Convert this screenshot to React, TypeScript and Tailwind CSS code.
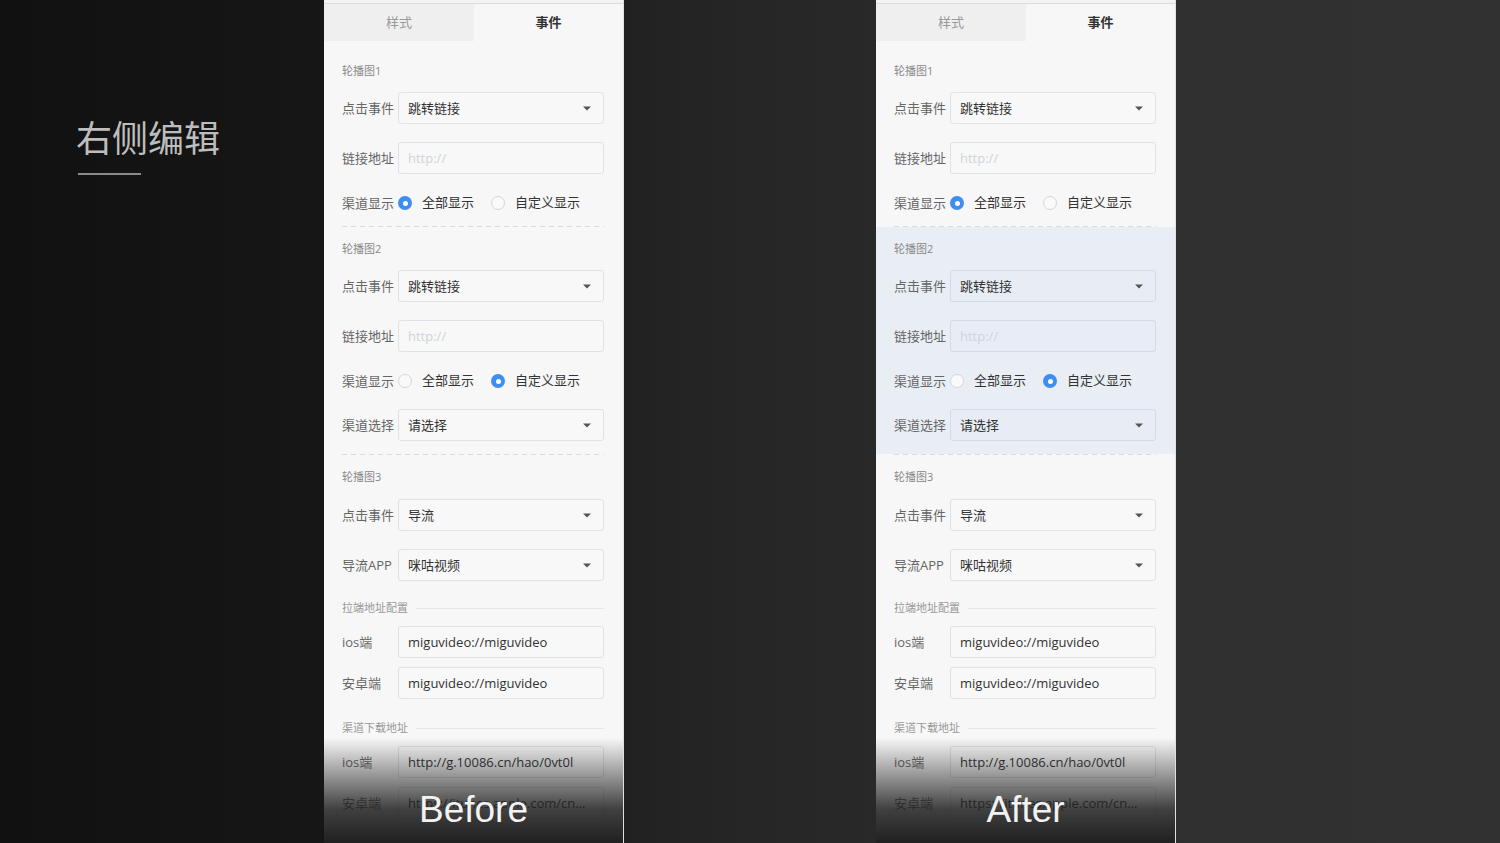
import React from 'react';

const Caret = () => (
  <svg width="8" height="5" viewBox="0 0 8 5" className="shrink-0">
    <path d="M0 0.5h8L4 4.5z" fill="#555" />
  </svg>
);

const fieldCls = (hl?: boolean) =>
  hl ? 'border-[#d3dbe6] bg-[#e8edf5]' : 'border-[#dce2e8] bg-[#f8f8f8]';

function Row({ label, children }: { label: string; children: React.ReactNode }) {
  return (
    <div className="flex items-center">
      <span className="w-[56px] shrink-0 text-[13px] leading-5 text-[#666]">{label}</span>
      {children}
    </div>
  );
}

function Select({ value, hl }: { value: string; hl?: boolean }) {
  return (
    <div className={`flex h-8 flex-1 items-center justify-between rounded-[3px] border pl-[9px] pr-[12px] ${fieldCls(hl)}`}>
      <span className="pt-px text-[13px] text-[#333]">{value}</span>
      <Caret />
    </div>
  );
}

function Input({ value, placeholder, hl }: { value?: string; placeholder?: string; hl?: boolean }) {
  return (
    <div className={`flex h-8 min-w-0 flex-1 items-center overflow-hidden rounded-[3px] border pl-[9px] pr-2 ${fieldCls(hl)}`}>
      {value ? (
        <span className="whitespace-nowrap pt-px text-[13px] text-[#333]">{value}</span>
      ) : (
        <span className="pt-px text-[13px] text-[#cfd4da]">{placeholder}</span>
      )}
    </div>
  );
}

function Radio({ checked }: { checked?: boolean }) {
  if (checked) {
    return (
      <span className="flex h-[14px] w-[14px] shrink-0 items-center justify-center rounded-full bg-[#3d8ef0]">
        <span className="h-[5px] w-[5px] rounded-full bg-white" />
      </span>
    );
  }
  return <span className="h-[14px] w-[14px] shrink-0 rounded-full border border-[#cfd7df] bg-[#fafafa]" />;
}

function ChannelRadios({ custom }: { custom?: boolean }) {
  return (
    <Row label="渠道显示">
      <div className="flex h-5 items-center text-[13px] text-[#333]">
        <Radio checked={!custom} />
        <span className="ml-[10px]">全部显示</span>
        <span className="ml-[17px] flex">
          <Radio checked={custom} />
        </span>
        <span className="ml-[10px]">自定义显示</span>
      </div>
    </Row>
  );
}

const SectionLabel = ({ text }: { text: string }) => (
  <div className="h-4 text-[11px] leading-4 text-[#888]">{text}</div>
);

const LineHeading = ({ text }: { text: string }) => (
  <div className="flex h-4 items-center gap-2 text-[11px] leading-4 text-[#999]">
    <span>{text}</span>
    <div className="h-px flex-1 bg-[#e6e6e6]" />
  </div>
);

const Dashed = () => (
  <div className="ml-[18px] mr-[19px] h-px bg-[repeating-linear-gradient(90deg,#dadada_0_5px,transparent_5px_9px)]" />
);

function Panel({ caption, after }: { caption: string; after?: boolean }) {
  return (
    <div className="relative h-full w-[300px] shrink-0 overflow-hidden border-r border-[#e0e0e0] bg-[#f7f7f7]">
      <div className="h-[3px] bg-[#f3f3f3]" />
      <div className="flex h-[38px] border-t border-[#dcdcdc] text-[13px]">
        <div className="flex w-[150px] items-center justify-center bg-[#efefef] text-[#999]">样式</div>
        <div className="flex flex-1 items-center justify-center font-semibold text-[#333]">事件</div>
      </div>

      {/* 轮播图1 */}
      <div className="pl-[18px] pr-[19px] pb-[13px] pt-[22px]">
        <SectionLabel text="轮播图1" />
        <div className="mt-[13px]">
          <Row label="点击事件">
            <Select value="跳转链接" />
          </Row>
        </div>
        <div className="mt-[18px]">
          <Row label="链接地址">
            <Input placeholder="http://" />
          </Row>
        </div>
        <div className="mt-[19px]">
          <ChannelRadios />
        </div>
      </div>
      <Dashed />

      {/* 轮播图2 */}
      <div className={`pl-[18px] pr-[19px] pb-[13px] pt-[14px] ${after ? 'bg-[#e9eef5]' : ''}`}>
        <SectionLabel text="轮播图2" />
        <div className="mt-[13px]">
          <Row label="点击事件">
            <Select value="跳转链接" hl={after} />
          </Row>
        </div>
        <div className="mt-[18px]">
          <Row label="链接地址">
            <Input placeholder="http://" hl={after} />
          </Row>
        </div>
        <div className="mt-[19px]">
          <ChannelRadios custom />
        </div>
        <div className="mt-[18px]">
          <Row label="渠道选择">
            <Select value="请选择" hl={after} />
          </Row>
        </div>
      </div>
      <Dashed />

      {/* 轮播图3 */}
      <div className="pl-[18px] pr-[19px] pt-[14px]">
        <SectionLabel text="轮播图3" />
        <div className="mt-[14px]">
          <Row label="点击事件">
            <Select value="导流" />
          </Row>
        </div>
        <div className="mt-[18px]">
          <Row label="导流APP">
            <Select value="咪咕视频" />
          </Row>
        </div>
        <div className="mt-[19px]">
          <LineHeading text="拉端地址配置" />
        </div>
        <div className="mt-[10px]">
          <Row label="ios端">
            <Input value="miguvideo://miguvideo" />
          </Row>
        </div>
        <div className="mt-[9px]">
          <Row label="安卓端">
            <Input value="miguvideo://miguvideo" />
          </Row>
        </div>
        <div className="mt-[21px]">
          <LineHeading text="渠道下载地址" />
        </div>
        <div className="mt-[10px]">
          <Row label="ios端">
            <Input value="http://g.10086.cn/hao/0vt0l" />
          </Row>
        </div>
        <div className="mt-[9px]">
          <Row label="安卓端">
            <Input value="https://itunes.apple.com/cn..." />
          </Row>
        </div>
      </div>

      {/* bottom fade + caption */}
      <div className="pointer-events-none absolute inset-x-0 bottom-0 h-[105px] bg-[linear-gradient(180deg,rgba(32,32,32,0)_0%,rgba(32,32,32,0.85)_68%,rgba(32,32,32,1)_100%)]" />
      <div className="absolute inset-x-0 bottom-[15px] text-center font-['Liberation_Sans',sans-serif] text-[37px] leading-none text-[#f2f2f2]">
        {caption}
      </div>
    </div>
  );
}

export default function App() {
  return (
    <div className="flex h-[843px] w-[1500px] overflow-hidden bg-[linear-gradient(90deg,#111111_0%,#161616_21%,#262626_50%,#303030_80%,#313131_100%)] font-['Open_Sans','Noto_Sans_CJK_SC',sans-serif]">
      <div className="w-[324px] shrink-0 pl-[76px] pt-[118px]">
        <h1 className="font-['Noto_Sans_CJK_SC',sans-serif] text-[36px] font-normal leading-none text-[#bdbdbd]">右侧编辑</h1>
        <div className="ml-[2px] mt-[19px] h-[2px] w-[63px] bg-[#8a8a8a]" />
      </div>
      <Panel caption="Before" />
      <div className="w-[252px] shrink-0" />
      <Panel caption="After" after />
    </div>
  );
}
